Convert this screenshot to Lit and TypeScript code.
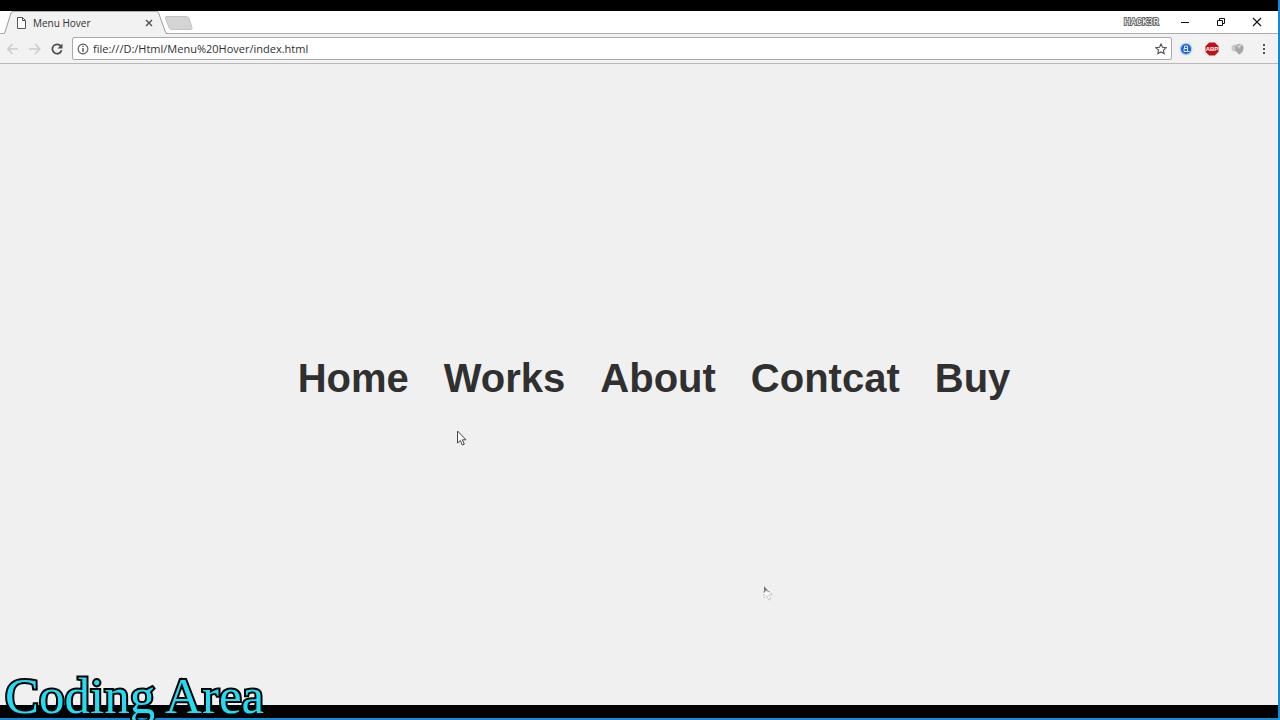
import { LitElement, html, css } from "lit";
import { customElement, property } from "lit/decorators.js";

@customElement("browser-chrome")
class BrowserChrome extends LitElement {
  @property() title = "";
  @property() address = "";

  static styles = css`
    :host { display: block; color: #303030; }
    button { border: 0; padding: 0; background: none; color: inherit; font: inherit; display: flex; align-items: center; justify-content: center; }
    svg { display: block; flex: none; }
    .strip { display: flex; height: 22px; background: #fff; border-bottom: 1px solid #acacac; padding-left: 4px; }
    .edge { height: 23px; }
    .tab { display: flex; align-items: center; flex: none; width: 144px; box-sizing: border-box; height: 23px; background: #f2f2f2; border-top: 1px solid #acacac; font-size: 10px; }
    .page { margin: 0 7px 0 4px; }
    .name { flex: 1; white-space: nowrap; }
    .tab button { width: 12px; height: 12px; margin-right: 2px; }
    .add { margin: 2px 0 0 -3px; }
    .controls { display: flex; align-items: center; margin-left: auto; }
    .user { font-family: Roboto, sans-serif; font-size: 9px; width: 34px; color: #fff; -webkit-text-stroke: 2px #666; paint-order: stroke; margin-right: 9px; }
    .controls button { width: 36px; height: 20px; }
    .controls .close { margin-right: 3px; }
    .bar { display: flex; align-items: center; height: 29px; background: #f2f2f2; border-bottom: 1px solid #b8b8b8; padding: 0 2px; }
    .bar > button { width: 22px; height: 24px; }
    .bar > .tool { width: 26px; }
    .bar > .menu { width: 25px; }
    .box { display: flex; align-items: center; flex: 1; box-sizing: border-box; height: 23px; background: #fff; border: 1px solid #a9a9a9; border-radius: 2px; padding: 0 4px; margin: 0 1px 0 4px; }
    .box input { flex: 1; min-width: 0; border: 0; outline: 0; padding: 0; margin-left: 4px; background: none; font: inherit; font-size: 11px; color: #303030; }
    .badge { font: bold 6px "Liberation Sans", sans-serif; fill: #fff; text-anchor: middle; }
  `;

  render() {
    return html`
      <div class="strip">
        <svg class="edge" width="9" height="23" viewBox="0 0 9 23"><path d="M0 23 C3 20 5 2 9 0 V23z" fill="#f2f2f2"/><path d="M0 22.5 L1 21 L7 2 Q7.500 .5 9 .5" fill="none" stroke="#999"/></svg>
        <div class="tab">
          <svg class="page" width="9" height="12" viewBox="0 0 9 12"><path d="M.5 .5h5l3 3v8h-8z M5.500 .5v3h3" fill="#fff" stroke="#555"/></svg>
          <span class="name">${this.title}</span>
          <button aria-label="Close tab"><svg width="8" height="8" viewBox="0 0 8 8"><path d="M1 1l6 6M7 1L1 7" stroke="#505050" stroke-width="1.400"/></svg></button>
        </div>
        <svg class="edge" width="10" height="23" viewBox="0 0 10 23"><path d="M0 0 L9 23 H0z" fill="#f2f2f2"/><path d="M0 .5 Q1 .5 2 3 L8 20 Q9 22.500 10 22.500" fill="none" stroke="#999"/></svg>
        <button class="add" aria-label="New tab"><svg width="30" height="16" viewBox="0 0 30 16"><path d="M2 1.500h20q2 0 3 2l3 9q.5 2-2 2H8q-2 0-3-2L1.500 3.500q-.5-2 .5-2z" fill="#d4d4d4" stroke="#c2c2c2"/></svg></button>
        <div class="controls">
          <span class="user">HACK3R</span>
          <button aria-label="Minimize"><svg width="10" height="10" viewBox="0 0 10 10"><path d="M1 5.500h8" stroke="#111"/></svg></button>
          <button aria-label="Restore"><svg width="10" height="10" viewBox="0 0 10 10"><path d="M1.500 3.500h5v5h-5z M3.500 3.500v-2h5v5h-2" fill="none" stroke="#111"/></svg></button>
          <button class="close" aria-label="Close"><svg width="10" height="10" viewBox="0 0 10 10"><path d="M1 1l8 8M9 1L1 9" stroke="#111" stroke-width="1.100"/></svg></button>
        </div>
      </div>
      <div class="bar">
        <button aria-label="Back"><svg width="14" height="12" viewBox="0 0 14 12"><path d="M12 6H2M6.500 1L1.700 6l4.800 5" fill="none" stroke="#ccc" stroke-width="1.500"/></svg></button>
        <button aria-label="Forward"><svg width="14" height="12" viewBox="0 0 14 12"><path d="M1 6h10M7 1l4.800 5L7 11" fill="none" stroke="#ccc" stroke-width="1.500"/></svg></button>
        <button aria-label="Reload"><svg width="12" height="12" viewBox="0 0 12 12"><path d="M10 3.400A4.700 4.700 0 1 0 10.600 7.300" fill="none" stroke="#4c4c4c" stroke-width="1.700"/><path d="M11.500 .5v5h-5z" fill="#4c4c4c"/></svg></button>
        <div class="box">
          <svg width="12" height="12" viewBox="0 0 12 12"><circle cx="6" cy="6" r="4.900" fill="none" stroke="#555" stroke-width="1.100"/><path d="M6 5v4M6 2.800v1.300" stroke="#444" stroke-width="1.300"/></svg>
          <input aria-label="Address" .value=${this.address}>
          <button aria-label="Bookmark"><svg width="12" height="12" viewBox="0 0 12 12"><path d="M6 1l1.500 3.300 3.700.4-2.800 2.400.8 3.600L6 8.900l-3.200 1.800.8-3.600L.8 4.700l3.700-.4z" fill="none" stroke="#505050" stroke-width="1.100"/></svg></button>
        </div>
        <button class="tool" aria-label="Translate extension"><svg width="14" height="14" viewBox="0 0 14 14"><circle cx="7" cy="7" r="6.300" fill="#a9cdf5"/><circle cx="7" cy="7" r="5" fill="#1c63cc"/><path d="M5.500 4h3v2.500h-3zM5 6.500h3.500v3H5zM8.500 9.500h2" fill="none" stroke="#dcebff"/></svg></button>
        <button class="tool" aria-label="Ad blocker"><svg width="14" height="14" viewBox="0 0 14 14"><path d="M4.200.5h5.600l3.700 3.700v5.600l-3.700 3.700H4.200L.5 9.800V4.200z" fill="#c0101a"/><text class="badge" x="7" y="9">ABP</text></svg></button>
        <button class="tool" aria-label="Download helper"><svg width="14" height="12" viewBox="0 0 14 12"><circle cx="4" cy="5" r="3.500" fill="#c9c9c9"/><path d="M4 5q0 3 4 6.500Q12 10 12.500 6T9.500 1 4 5z" fill="#a6a6a6"/><path d="M6 3l2 3 3-4-1-1z" fill="#d0d0d0"/></svg></button>
        <button class="menu" aria-label="Menu"><svg width="4" height="12" viewBox="0 0 4 12"><path d="M1 1h2v2H1zM1 5h2v2H1zM1 9h2v2H1z" fill="#555"/></svg></button>
      </div>`;
  }
}

@customElement("app-root")
class AppRoot extends LitElement {
  static styles = css`
    :host { display: flex; flex-direction: column; position: relative; box-sizing: border-box; height: 100vh; border: solid #148ad2; border-width: 0 2px 2px 0; background: #f0f0f0; font-family: "Open Sans", sans-serif; }
    .top { height: 11px; background: #000; flex: none; }
    .bottom { height: 13px; background: #000; flex: none; }
    main { flex: 1; display: flex; align-items: center; justify-content: center; padding: 0 0 14px 30px; }
    ul { display: flex; gap: 35px; margin: 0; padding: 0; list-style: none; }
    a { color: #303030; text-decoration: none; font: bold 40px/46px "Liberation Sans", Arial, sans-serif; }
    .caption { position: absolute; left: 5px; bottom: -2px; font: 51px/48px "Liberation Serif", serif; color: #22dcf4; -webkit-text-stroke: 4px #000; paint-order: stroke; white-space: nowrap; }
    .pointer { position: absolute; left: 457px; top: 430px; }
    .ghost { left: 763px; top: 585px; }
  `;

  render() {
    const links = ["Home", "Works", "About", "Contcat", "Buy"];
    return html`
      <div class="top"></div>
      <browser-chrome title="Menu Hover" address="file:///D:/Html/Menu%20Hover/index.html"></browser-chrome>
      <main>
        <nav><ul>${links.map((t) => html`<li><a href="#">${t}</a></li>`)}</ul></nav>
      </main>
      <div class="bottom"></div>
      <svg class="pointer" width="11" height="17" viewBox="0 0 11 17"><path d="M.5 1v12l2.800-2.500 2 4.500 2-.9-2-4.300h3.700z" fill="#fff" stroke="#444"/></svg>
      <svg class="pointer ghost" width="11" height="17" viewBox="0 0 11 17"><path d="M1 6l0 7 2.800-2.500 2 4.500 2-.9-2-4.300h3.700L6 6z" fill="#fafafa" stroke="#bbb" stroke-dasharray="2 1"/><path d="M1 1v7L3 5l4 3z" fill="#777"/></svg>
      <div class="caption">Coding Area</div>`;
  }
}
